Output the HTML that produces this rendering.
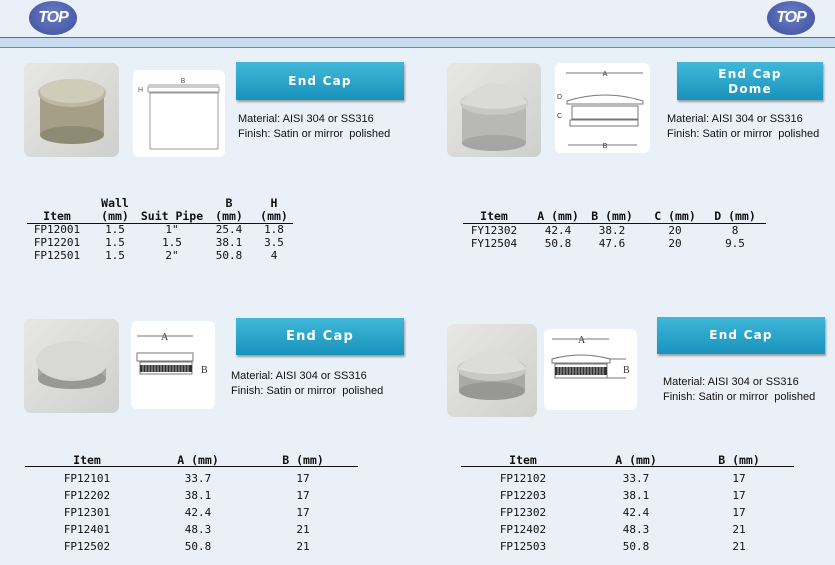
<!DOCTYPE html>
<html><head><meta charset="utf-8"><style>
*{margin:0;padding:0;box-sizing:border-box}
body{width:835px;height:565px;overflow:hidden;position:relative;background:#e9f0f8;font-family:"Liberation Sans",sans-serif;color:#111}
.a{position:absolute}
.c{position:absolute;text-align:center;white-space:nowrap;font-family:"DejaVu Sans Mono","Liberation Mono",monospace;font-size:11px;line-height:13px}
.h{font-weight:bold;font-size:11.5px}
.btn{position:absolute;background:linear-gradient(#3fb8d8,#1a93bd);box-shadow:1px 2px 2px rgba(0,0,0,.35);color:#fff;font-weight:bold;font-size:12px;letter-spacing:1.2px;text-align:center;font-family:"DejaVu Sans",sans-serif}
.txt{position:absolute;font-size:11px;line-height:15px;white-space:nowrap}
.ph{position:absolute;border-radius:7px;background:linear-gradient(135deg,#e7e7e4,#cfcfcc)}
.dr{position:absolute;background:#fff;border-radius:6px}
.logo{position:absolute;width:48px;height:34px;border-radius:50%;background:radial-gradient(ellipse at 50% 40%,#6a7dc4,#3d4f9e);color:#fff;font:italic bold 16px "Liberation Sans",sans-serif;text-align:center;line-height:34px;letter-spacing:-1px}
.line{position:absolute;height:1px;background:#111}
</style></head><body>
<div class="logo" style="left:29px;top:1px">TOP</div>
<div class="logo" style="left:767px;top:1px">TOP</div>
<div class="a" style="left:0;top:37px;width:835px;height:1px;background:#4a6fa8"></div>
<div class="a" style="left:0;top:38px;width:835px;height:9px;background:#c8dcf0"></div>
<div class="a" style="left:0;top:47px;width:835px;height:1px;background:#6a8ab8"></div>

<!-- Section 1 -->
<div class="ph" style="left:24px;top:63px;width:95px;height:94px"></div>
<svg class="a" style="left:24px;top:63px" width="95" height="94"><rect x="16" y="30" width="64" height="42" fill="#a59f88"/><ellipse cx="48" cy="72" rx="32" ry="9" fill="#8f8a74"/><ellipse cx="48" cy="30" rx="34" ry="14" fill="#bdb8a4"/><ellipse cx="48" cy="28" rx="32" ry="12" fill="#d0ccba"/></svg>
<div class="dr" style="left:133px;top:70px;width:92px;height:87px"></div>
<svg class="a" style="left:133px;top:70px" width="92" height="87"><g fill="none" stroke="#999" stroke-width="1"><line x1="15" y1="15" x2="86" y2="15"/><rect x="15" y="17" width="71" height="5"/><rect x="17" y="23" width="68" height="56"/></g><text x="50" y="13" font-size="7" fill="#555" text-anchor="middle" font-family="Liberation Sans">B</text><text x="5" y="22" font-size="7" fill="#555" font-family="Liberation Sans">H</text></svg>
<div class="btn" style="left:236px;top:62px;width:168px;height:38px;line-height:38px">End Cap</div>
<div class="txt" style="left:238px;top:112px">Material: AISI 304 or SS316<br>Finish: Satin or mirror&nbsp; polished</div>
<div class="c h" style="left:85px;top:197px;width:60px">Wall</div>
<div class="c h" style="left:199px;top:197px;width:60px">B</div>
<div class="c h" style="left:244px;top:197px;width:60px">H</div>
<div class="c h" style="left:27px;top:210px;width:60px">Item</div>
<div class="c h" style="left:85px;top:210px;width:60px">(mm)</div>
<div class="c h" style="left:137px;top:210px;width:70px">Suit Pipe</div>
<div class="c h" style="left:199px;top:210px;width:60px">(mm)</div>
<div class="c h" style="left:244px;top:210px;width:60px">(mm)</div>
<div class="line" style="left:27px;top:223px;width:266px"></div>
<div class="c" style="left:27px;top:223px;width:60px">FP12001<br>FP12201<br>FP12501</div>
<div class="c" style="left:85px;top:223px;width:60px">1.5<br>1.5<br>1.5</div>
<div class="c" style="left:142px;top:223px;width:60px">1"<br>1.5<br>2"</div>
<div class="c" style="left:199px;top:223px;width:60px">25.4<br>38.1<br>50.8</div>
<div class="c" style="left:244px;top:223px;width:60px">1.8<br>3.5<br>4</div>

<!-- Section 2 -->
<div class="ph" style="left:447px;top:63px;width:94px;height:94px"></div>
<svg class="a" style="left:447px;top:63px" width="94" height="94"><rect x="15" y="40" width="64" height="40" fill="#b8b8b6"/><ellipse cx="47" cy="80" rx="32" ry="8" fill="#a5a5a3"/><ellipse cx="47" cy="40" rx="34" ry="12" fill="#c8c8c6"/><path d="M13 40 Q47 0 81 40 Q47 52 13 40Z" fill="#dadad8"/></svg>
<div class="dr" style="left:555px;top:63px;width:95px;height:90px"></div>
<svg class="a" style="left:555px;top:63px" width="95" height="90"><g fill="none" stroke="#777" stroke-width="1"><line x1="11" y1="10" x2="88" y2="10"/><path d="M12 38 Q50 26 88 38 L88 41 L12 41Z"/><rect x="17" y="43" width="66" height="13"/><rect x="15" y="57" width="68" height="6"/><line x1="13" y1="82" x2="82" y2="82"/></g><text x="50" y="13" font-size="7" fill="#333" text-anchor="middle">A</text><text x="2" y="36" font-size="7" fill="#333">D</text><text x="2" y="55" font-size="7" fill="#333">C</text><text x="50" y="85" font-size="7" fill="#333" text-anchor="middle">B</text></svg>
<div class="btn" style="left:677px;top:62px;width:146px;height:38px;line-height:15px;padding-top:5px">End Cap<br>Dome</div>
<div class="txt" style="left:667px;top:112px">Material: AISI 304 or SS316<br>Finish: Satin or mirror&nbsp; polished</div>
<div class="c h" style="left:464px;top:210px;width:60px">Item</div>
<div class="c h" style="left:523px;top:210px;width:70px">A (mm)</div>
<div class="c h" style="left:577px;top:210px;width:70px">B (mm)</div>
<div class="c h" style="left:640px;top:210px;width:70px">C (mm)</div>
<div class="c h" style="left:700px;top:210px;width:70px">D (mm)</div>
<div class="line" style="left:463px;top:223px;width:303px"></div>
<div class="c" style="left:464px;top:224px;width:60px">FY12302<br>FY12504</div>
<div class="c" style="left:528px;top:224px;width:60px">42.4<br>50.8</div>
<div class="c" style="left:582px;top:224px;width:60px">38.2<br>47.6</div>
<div class="c" style="left:645px;top:224px;width:60px">20<br>20</div>
<div class="c" style="left:705px;top:224px;width:60px">8<br>9.5</div>

<!-- Section 3 -->
<div class="ph" style="left:24px;top:319px;width:95px;height:94px"></div>
<svg class="a" style="left:24px;top:319px" width="95" height="94"><rect x="14" y="42" width="68" height="18" fill="#a9a9a7"/><ellipse cx="48" cy="60" rx="34" ry="10" fill="#989896"/><ellipse cx="48" cy="42" rx="36" ry="20" fill="#d8d8d6"/></svg>
<div class="dr" style="left:131px;top:321px;width:84px;height:88px"></div>
<svg class="a" style="left:131px;top:321px" width="84" height="88"><g fill="none" stroke="#777"><line x1="6" y1="15" x2="62" y2="15"/><rect x="6" y="32" width="56" height="8"/><rect x="9" y="41" width="52" height="12"/></g><rect x="9" y="44" width="52" height="7" fill="#333"/><g stroke="#fff" stroke-width=".6"><path d="M12 44v7M15 44v7M18 44v7M21 44v7M24 44v7M27 44v7M30 44v7M33 44v7M36 44v7M39 44v7M42 44v7M45 44v7M48 44v7M51 44v7M54 44v7M57 44v7"/></g><text x="30" y="19" font-size="10" fill="#333" font-family="Liberation Serif">A</text><text x="70" y="52" font-size="10" fill="#333" font-family="Liberation Serif">B</text></svg>
<div class="btn" style="left:236px;top:318px;width:168px;height:37px;line-height:37px;font-size:13px">End Cap</div>
<div class="txt" style="left:231px;top:369px">Material: AISI 304 or SS316<br>Finish: Satin or mirror&nbsp; polished</div>
<div class="c h" style="left:57px;top:454px;width:60px">Item</div>
<div class="c h" style="left:163px;top:454px;width:70px">A (mm)</div>
<div class="c h" style="left:268px;top:454px;width:70px">B (mm)</div>
<div class="line" style="left:25px;top:466px;width:333px"></div>
<div class="c" style="left:57px;top:470px;width:60px;line-height:17px">FP12101<br>FP12202<br>FP12301<br>FP12401<br>FP12502</div>
<div class="c" style="left:168px;top:470px;width:60px;line-height:17px">33.7<br>38.1<br>42.4<br>48.3<br>50.8</div>
<div class="c" style="left:273px;top:470px;width:60px;line-height:17px">17<br>17<br>17<br>21<br>21</div>

<!-- Section 4 -->
<div class="ph" style="left:447px;top:324px;width:90px;height:93px"></div>
<svg class="a" style="left:447px;top:324px" width="90" height="93"><rect x="12" y="45" width="66" height="22" fill="#a9a9a7"/><ellipse cx="45" cy="67" rx="33" ry="9" fill="#979795"/><ellipse cx="45" cy="45" rx="35" ry="12" fill="#c8c8c6"/><path d="M10 45 Q45 10 80 45 Q45 55 10 45Z" fill="#dcdcda"/></svg>
<div class="dr" style="left:544px;top:329px;width:93px;height:81px"></div>
<svg class="a" style="left:544px;top:329px" width="93" height="81"><g fill="none" stroke="#777"><line x1="8" y1="10" x2="65" y2="10"/><path d="M8 30 Q37 22 66 30 L66 34 L8 34Z"/><rect x="11" y="35" width="52" height="14"/><line x1="66" y1="30" x2="82" y2="30"/><line x1="60" y1="49" x2="82" y2="49"/></g><rect x="11" y="38" width="52" height="8" fill="#333"/><g stroke="#fff" stroke-width=".6"><path d="M14 38v8M17 38v8M20 38v8M23 38v8M26 38v8M29 38v8M32 38v8M35 38v8M38 38v8M41 38v8M44 38v8M47 38v8M50 38v8M53 38v8M56 38v8M59 38v8"/></g><text x="34" y="14" font-size="10" fill="#333" font-family="Liberation Serif">A</text><text x="79" y="44" font-size="10" fill="#333" font-family="Liberation Serif">B</text></svg>
<div class="btn" style="left:657px;top:317px;width:168px;height:37px;line-height:37px">End Cap</div>
<div class="txt" style="left:663px;top:375px">Material: AISI 304 or SS316<br>Finish: Satin or mirror&nbsp; polished</div>
<div class="c h" style="left:493px;top:454px;width:60px">Item</div>
<div class="c h" style="left:601px;top:454px;width:70px">A (mm)</div>
<div class="c h" style="left:704px;top:454px;width:70px">B (mm)</div>
<div class="line" style="left:461px;top:466px;width:333px"></div>
<div class="c" style="left:493px;top:470px;width:60px;line-height:17px">FP12102<br>FP12203<br>FP12302<br>FP12402<br>FP12503</div>
<div class="c" style="left:606px;top:470px;width:60px;line-height:17px">33.7<br>38.1<br>42.4<br>48.3<br>50.8</div>
<div class="c" style="left:709px;top:470px;width:60px;line-height:17px">17<br>17<br>17<br>21<br>21</div>
</body></html>
